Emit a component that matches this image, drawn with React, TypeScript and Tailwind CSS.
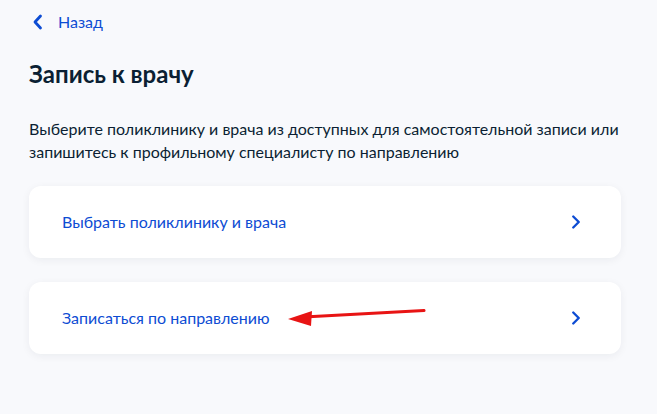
import { ChevronRight } from 'lucide-react';

function OptionCard({ label, children }: { label: string; children?: React.ReactNode }) {
  return (
    <div className="relative flex h-[72px] items-center justify-between rounded-[12px] bg-white pl-[33px] pr-[34px] shadow-[0_2px_8px_rgba(11,31,51,0.06)]">
      <span className="text-[16px] leading-6 text-[#0d4cd3]">{label}</span>
      <ChevronRight size={22} strokeWidth={2.6} className="text-[#0d4cd3]" />
      {children}
    </div>
  );
}

export default function App() {
  return (
    <div
      className="min-h-[414px] w-full bg-[#f8f9fc] pl-[29px] pr-[36px] pt-[10px] text-[#0b1f33]"
      style={{ fontFamily: 'Lato, "Noto Sans", sans-serif' }}
    >
      <a className="flex items-center gap-[14px] text-[16px] leading-6 text-[#0d4cd3]">
        <svg width="12" height="16" viewBox="0 0 12 16" className="ml-[3px]">
          <path d="M8.5 2 L3 8 L8.5 14" fill="none" stroke="#0d4cd3" strokeWidth="2.8" strokeLinecap="round" strokeLinejoin="round" />
        </svg>
        Назад
      </a>

      <h1 className="mt-[24px] text-[24px] font-bold leading-8">Запись к врачу</h1>

      <p className="mt-[27px] text-[16px] leading-[23px]">
        Выберите поликлинику и врача из доступных для самостоятельной записи или
        запишитесь к профильному специалисту по направлению
      </p>

      <div className="mt-[23px] flex flex-col gap-[24px]">
        <OptionCard label="Выбрать поликлинику и врача" />
        <OptionCard label="Записаться по направлению">
          <svg className="absolute left-[255px] top-[22px]" width="145" height="24" viewBox="0 0 145 24">
            <line x1="20" y1="13" x2="140" y2="6.5" stroke="#e81414" strokeWidth="3" strokeLinecap="round" />
            <polygon points="4,15 28,7 27,22" fill="#e81414" />
          </svg>
        </OptionCard>
      </div>
    </div>
  );
}
